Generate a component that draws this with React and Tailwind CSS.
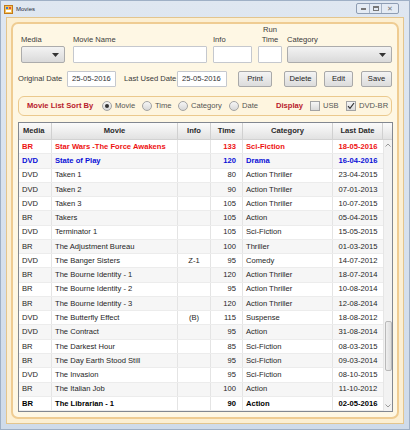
import React from 'react';

const rows = [
  { media: 'BR', movie: 'Star Wars -The Force Awakens', info: '', time: 133, category: 'Sci-Fiction', date: '18-05-2016', tone: 'red' },
  { media: 'DVD', movie: 'State of Play', info: '', time: 120, category: 'Drama', date: '16-04-2016', tone: 'blue' },
  { media: 'DVD', movie: 'Taken 1', info: '', time: 80, category: 'Action Thriller', date: '23-04-2015' },
  { media: 'DVD', movie: 'Taken 2', info: '', time: 90, category: 'Action Thriller', date: '07-01-2013' },
  { media: 'DVD', movie: 'Taken 3', info: '', time: 105, category: 'Action Thriller', date: '10-07-2015' },
  { media: 'BR', movie: 'Takers', info: '', time: 105, category: 'Action', date: '05-04-2015' },
  { media: 'DVD', movie: 'Terminator 1', info: '', time: 105, category: 'Sci-Fiction', date: '15-05-2015' },
  { media: 'BR', movie: 'The Adjustment Bureau', info: '', time: 100, category: 'Thriller', date: '01-03-2015' },
  { media: 'DVD', movie: 'The Banger Sisters', info: 'Z-1', time: 95, category: 'Comedy', date: '14-07-2012' },
  { media: 'BR', movie: 'The Bourne Identity - 1', info: '', time: 120, category: 'Action Thriller', date: '18-07-2014' },
  { media: 'BR', movie: 'The Bourne Identity - 2', info: '', time: 95, category: 'Action Thriller', date: '10-08-2014' },
  { media: 'BR', movie: 'The Bourne Identity - 3', info: '', time: 120, category: 'Action Thriller', date: '12-08-2014' },
  { media: 'DVD', movie: 'The Butterfly Effect', info: '(B)', time: 115, category: 'Suspense', date: '18-08-2012' },
  { media: 'DVD', movie: 'The Contract', info: '', time: 95, category: 'Action', date: '31-08-2014' },
  { media: 'BR', movie: 'The Darkest Hour', info: '', time: 85, category: 'Sci-Fiction', date: '08-03-2015' },
  { media: 'BR', movie: 'The Day Earth Stood Still', info: '', time: 95, category: 'Sci-Fiction', date: '09-03-2014' },
  { media: 'DVD', movie: 'The Invasion', info: '', time: 95, category: 'Sci-Fiction', date: '08-10-2015' },
  { media: 'BR', movie: 'The Italian Job', info: '', time: 100, category: 'Action', date: '11-10-2012' },
  { media: 'BR', movie: 'The Librarian - 1', info: '', time: 90, category: 'Action', date: '02-05-2016', tone: 'bold' },
];

const toneClass = {
  red: 'text-[#ee1111] font-bold',
  blue: 'text-[#0a10d8] font-bold',
  bold: 'text-black font-bold',
};

const Arrow = () => (
  <svg width="7" height="4" viewBox="0 0 7 4" className="shrink-0">
    <path d="M0 0 H7 L3.5 4 Z" fill="#333" />
  </svg>
);

const Combo = ({ className }) => (
  <div className={`h-[17px] flex items-center justify-end pr-[5px] border border-[#acacac] rounded-[2px] bg-gradient-to-b from-[#f3f3f3] to-[#dadada] ${className}`}>
    <Arrow />
  </div>
);

const Input = ({ className, value }) => (
  <div className={`flex items-center px-[4px] border border-[#c5c8ce] rounded-[1px] bg-white text-[#333] ${className}`}>
    {value}
  </div>
);

const Button = ({ label, className }) => (
  <div className={`h-[16px] flex items-center justify-center border border-[#a9a9a9] rounded-[2px] bg-gradient-to-b from-[#f4f4f4] to-[#dcdcdc] text-[#222] ${className}`}>
    {label}
  </div>
);

const Radio = ({ checked }) => (
  <div className="w-[10px] h-[10px] rounded-full border border-[#a3a3a3] bg-gradient-to-b from-[#f6f6f6] to-[#d8d8d8] flex items-center justify-center shrink-0">
    {checked && <div className="w-[4px] h-[4px] rounded-full bg-[#333]" />}
  </div>
);

const Check = ({ checked }) => (
  <div className="w-[10px] h-[10px] border border-[#a3a3a3] bg-gradient-to-b from-[#f6f6f6] to-[#dadada] flex items-center justify-center shrink-0">
    {checked && (
      <svg width="8" height="8" viewBox="0 0 8 8">
        <path d="M1 4.2 L3 6.4 L7 1" stroke="#333" strokeWidth="1.2" fill="none" />
      </svg>
    )}
  </div>
);

const cols = 'grid grid-cols-[33px_126px_33px_32px_90px_50px]';

export default function App() {
  return (
    <div
      className="w-[410px] h-[430px] flex flex-col bg-gradient-to-b from-[#dfe7f1] to-[#cfdbea] border border-[#9fb0c6] text-[7.6px] leading-none"
      style={{ fontFamily: '"Liberation Sans", Arial, sans-serif' }}
    >
      {/* title bar */}
      <div className="h-[16px] flex items-center pl-[3px] pr-[10px] shrink-0">
        <svg width="9" height="9" viewBox="0 0 9 9" className="shrink-0">
          <rect x="0.5" y="0.5" width="8" height="8" fill="#f6c35a" stroke="#c27a1a" />
          <rect x="2" y="2" width="2" height="2" fill="#3a7bd5" />
          <rect x="5" y="2" width="2" height="2" fill="#e24b3a" />
          <rect x="2" y="5" width="5" height="2" fill="#ffffff" />
        </svg>
        <span className="ml-[3px] text-[6px] text-[#1f2a3a]">Movies</span>
        <div className="ml-auto flex h-[11px] border border-[#8e9db3] rounded-[2px] bg-[#e4ebf4] self-start mt-[2px]">
          <div className="w-[13px] flex items-center justify-center border-r border-[#a6b3c6]">
            <div className="w-[5px] h-[2px] border border-[#777]" />
          </div>
          <div className="w-[12px] flex items-center justify-center border-r border-[#a6b3c6]">
            <div className="w-[6px] h-[5px] border border-[#777] border-t-2" />
          </div>
          <div className="w-[16px] flex items-center justify-center text-[7px] text-[#777]">✕</div>
        </div>
      </div>

      {/* client area */}
      <div className="flex-1 ml-[5px] mr-[5px] mb-[5px] bg-[#fcefd2] border border-[#e3c58e] p-[4px] flex">
        <div className="flex-1 flex flex-col rounded-[7px] border-2 border-[#efcc92] bg-[#fef7e4] pt-[1px] pb-[5px] pl-[5px] text-[#3a3a3a]">
          {/* row 1 */}
          <div className="flex items-end pl-[3px]">
            <div className="w-[44px] flex flex-col">
              <div className="h-[21px] flex items-end pb-[2px]">Media</div>
              <Combo className="w-[44px]" />
            </div>
            <div className="w-[134px] ml-[8px] flex flex-col">
              <div className="h-[21px] flex items-end pb-[2px]">Movie Name</div>
              <Input className="h-[17px] w-[134px]" />
            </div>
            <div className="w-[39px] ml-[6px] flex flex-col">
              <div className="h-[21px] flex items-end pb-[2px]">Info</div>
              <Input className="h-[17px] w-[39px]" />
            </div>
            <div className="w-[24px] ml-[6px] flex flex-col">
              <div className="h-[21px] flex flex-col items-center justify-end pb-[2px] gap-[3px]">
                <span>Run</span>
                <span>Time</span>
              </div>
              <Input className="h-[17px] w-[24px]" />
            </div>
            <div className="w-[105px] ml-[5px] flex flex-col">
              <div className="h-[21px] flex items-end pb-[2px]">Category</div>
              <Combo className="w-[105px]" />
            </div>
          </div>

          {/* row 2 */}
          <div className="flex items-center mt-[8px]">
            <span className="w-[49px]">Original Date</span>
            <Input className="h-[16px] w-[49px]" value="25-05-2016" />
            <span className="w-[53px] ml-[8px]">Last Used Date</span>
            <Input className="h-[16px] w-[50px]" value="25-05-2016" />
            <Button label="Print" className="w-[34px] ml-[11px]" />
            <Button label="Delete" className="w-[33px] ml-[12px]" />
            <Button label="Edit" className="w-[29px] ml-[7px]" />
            <Button label="Save" className="w-[31px] ml-[8px]" />
          </div>

          {/* sort by */}
          <div className="mt-[9px] w-[374px] h-[20px] flex items-center rounded-[6px] border border-[#ebc98d] bg-[#fef5df] pl-[8px] text-[#555]">
            <span className="w-[75px] font-bold text-[#b8202c]">Movie List Sort By</span>
            <Radio checked />
            <span className="w-[27px] ml-[3px]">Movie</span>
            <Radio />
            <span className="w-[23px] ml-[3px]">Time</span>
            <Radio />
            <span className="w-[38px] ml-[3px]">Category</span>
            <Radio />
            <span className="w-[34px] ml-[3px]">Date</span>
            <span className="w-[34px] font-bold text-[#b8202c]">Display</span>
            <Check />
            <span className="w-[23px] ml-[3px]">USB</span>
            <Check checked />
            <span className="ml-[3px]">DVD-BR</span>
          </div>

          {/* table */}
          <div className="mt-[6px] w-[375px] h-[290px] flex flex-col border border-[#828790] bg-white text-[#1e1e1e]">
            <div className="h-[17px] shrink-0 flex bg-gradient-to-b from-[#fbfbfb] to-[#e2e2e2] border-b border-[#d2d2d2] font-bold text-[#2a2a2a]">
              <div className={`${cols} w-[364px]`}>
                <div className="flex items-center pl-[4px] border-r border-[#d0d0d0]">Media</div>
                <div className="flex items-center justify-center border-r border-[#d0d0d0]">Movie</div>
                <div className="flex items-center justify-center border-r border-[#d0d0d0]">Info</div>
                <div className="flex items-center justify-center border-r border-[#d0d0d0]">Time</div>
                <div className="flex items-center justify-center border-r border-[#d0d0d0]">Category</div>
                <div className="flex items-center justify-center border-r border-[#d0d0d0]">Last Date</div>
              </div>
              <div className="flex-1" />
            </div>
            <div className="flex-1 flex min-h-0">
              <div className="w-[364px] flex flex-col">
                {rows.map((r, i) => (
                  <div
                    key={r.movie}
                    className={`${cols} flex-1 border-b border-[#ececec] ${i % 2 ? 'bg-[#f6f6f6]' : 'bg-white'} ${toneClass[r.tone] || ''}`}
                  >
                    <div className="flex items-center pl-[3px] border-r border-[#e4e4e4]">{r.media}</div>
                    <div className="flex items-center pl-[3px] border-r border-[#e4e4e4] whitespace-nowrap">{r.movie}</div>
                    <div className="flex items-center justify-center border-r border-[#e4e4e4]">{r.info}</div>
                    <div className="flex items-center justify-end pr-[6px] border-r border-[#e4e4e4]">{r.time}</div>
                    <div className="flex items-center pl-[3px] border-r border-[#e4e4e4]">{r.category}</div>
                    <div className="flex items-center justify-center">{r.date}</div>
                  </div>
                ))}
              </div>
              {/* scrollbar */}
              <div className="flex-1 flex flex-col items-center bg-[#f2f2f2] border-l border-[#e6e6e6]">
                <div className="h-[10px] flex items-center justify-center">
                  <svg width="6" height="4" viewBox="0 0 6 4"><path d="M0.5 3.5 L3 1 L5.5 3.5" stroke="#9a9a9a" fill="none" /></svg>
                </div>
                <div className="h-[171px]" />
                <div className="w-[7px] h-[50px] rounded-[2px] border border-[#b9b9b9] bg-gradient-to-r from-[#efefef] to-[#dcdcdc]" />
                <div className="flex-1" />
                <div className="h-[10px] flex items-center justify-center">
                  <svg width="6" height="4" viewBox="0 0 6 4"><path d="M0.5 0.5 L3 3 L5.5 0.5" stroke="#9a9a9a" fill="none" /></svg>
                </div>
              </div>
            </div>
          </div>
        </div>
      </div>
    </div>
  );
}
